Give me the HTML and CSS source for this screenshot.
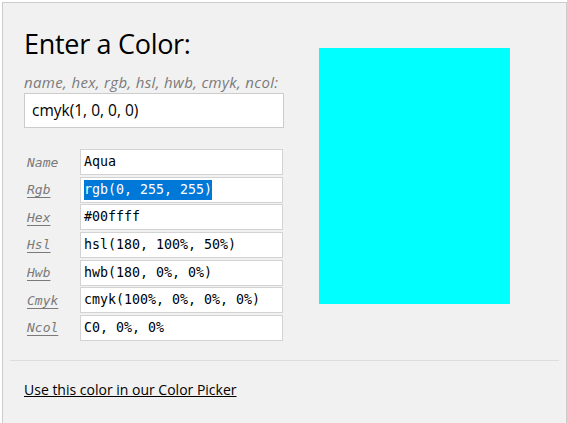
FILE: index.html
```html
<!DOCTYPE html>
<html>
<head>
<meta charset="utf-8">
<link rel="stylesheet" href="styles.css">
</head>
<body>
<div class="panel">
  <div class="top">
    <div class="left">
      <h2 class="title">Enter a Color:</h2>
      <div class="hint">name, hex, rgb, hsl, hwb, cmyk, ncol:</div>
      <div class="entry">cmyk(1, 0, 0, 0)</div>
      <div class="table">
        <div class="row"><span class="lbl plain">Name</span><div class="val">Aqua</div></div>
        <div class="row"><span class="lbl">Rgb</span><div class="val"><span class="sel">rgb(0, 255, 255)</span></div></div>
        <div class="row"><span class="lbl">Hex</span><div class="val">#00ffff</div></div>
        <div class="row"><span class="lbl">Hsl</span><div class="val">hsl(180, 100%, 50%)</div></div>
        <div class="row"><span class="lbl">Hwb</span><div class="val">hwb(180, 0%, 0%)</div></div>
        <div class="row"><span class="lbl">Cmyk</span><div class="val">cmyk(100%, 0%, 0%, 0%)</div></div>
        <div class="row"><span class="lbl">Ncol</span><div class="val">C0, 0%, 0%</div></div>
      </div>
    </div>
    <div class="swatch"></div>
  </div>
  <hr class="rule">
  <div class="foot"><a class="link" href="#">Use this color in our Color Picker</a></div>
</div>
</body>
</html>
```
FILE: styles.css
```css
html, body {
  margin: 0;
  padding: 0;
  background: #fff;
}
body {
  font-family: "Open Sans", "Noto Sans", sans-serif;
  overflow: hidden;
}
.panel {
  margin: 2px 0 0 2px;
  width: 563px;
  min-height: 440px;
  border: 1px solid #cccccc;
  border-bottom: 0;
  background: #f1f1f1;
}
.top {
  display: flex;
  padding-left: 21px;
}
.left {
  width: 260px;
}
.title {
  margin: 24px 0 0 0;
  font-weight: normal;
  font-size: 27px;
  line-height: 34px;
  color: #000;
  letter-spacing: -0.3px;
}
.hint {
  margin-top: 12px;
  font-style: italic;
  font-size: 15px;
  line-height: 18px;
  color: #7a7a7a;
  white-space: nowrap;
  letter-spacing: 0.35px;
}
.entry {
  margin-top: 2px;
  height: 35px;
  box-sizing: border-box;
  border: 1px solid #cccccc;
  background: #fff;
  padding-left: 7px;
  font-size: 15.5px;
  line-height: 33px;
  color: #000;
}
.table {
  margin-top: 21px;
  display: flex;
  flex-direction: column;
  gap: 1.67px;
}
.row {
  display: flex;
  align-items: center;
}
.lbl {
  width: 53px;
  padding-left: 3px;
  font-family: "DejaVu Sans Mono", monospace;
  font-style: italic;
  font-size: 13px;
  color: #7a7a7a;
  text-decoration: underline;
  text-underline-offset: 3px;
}
.lbl.plain {
  text-decoration: none;
}
.val {
  width: 203px;
  height: 26px;
  box-sizing: border-box;
  border: 1px solid #d3d3d3;
  background: #fff;
  padding-left: 3px;
  font-family: "DejaVu Sans Mono", monospace;
  font-size: 13.3px;
  line-height: 24px;
  color: #000;
  white-space: nowrap;
}
.sel {
  background: #0078d7;
  color: #fff;
  display: inline-block;
  line-height: 20px;
}
.swatch {
  width: 191px;
  height: 256px;
  margin: 45px 0 0 35px;
  background: #00ffff;
}
.rule {
  margin: 19px 7px 0 7px;
  border: 0;
  border-top: 1px solid #dddddd;
  height: 0;
}
.foot {
  padding: 17px 0 0 21px;
}
.link {
  font-size: 14px;
  line-height: 18px;
  color: #000;
  text-decoration: underline;
}
```
